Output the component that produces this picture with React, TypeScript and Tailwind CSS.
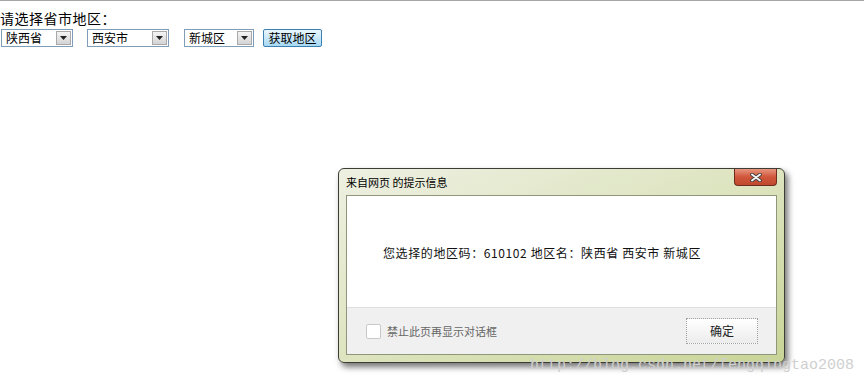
import React from 'react';

const cjk = { fontFamily: '"Noto Sans CJK SC", "Noto Sans", sans-serif' };

const FakeSelect: React.FC<{ value: string; width: string }> = ({ value, width }) => (
    <div className={`flex h-[18px] items-center border border-[#7f9db9] bg-white ${width}`}>
        <span className="flex-1 pl-[4px] text-[12px] leading-none text-black">{value}</span>
        {/* dropdown arrow box */}
        <div className="mr-[1px] flex h-[14px] w-[15px] items-center justify-center border border-[#a9a9a9] bg-gradient-to-b from-[#f4f4f4] to-[#d4d4d4]">
            <svg width="7" height="4" viewBox="0 0 7 4">
                <path d="M0 0 L7 0 L3.5 4 Z" fill="#222" />
            </svg>
        </div>
    </div>
);

export default function App() {
    return (
        <div className="relative h-[384px] w-[864px] overflow-hidden bg-white" style={cjk}>
            <div className="h-[2px] border-t border-[#a5a5a5]" />

            {/* Form */}
            <div className="pt-[7px] text-[14px] leading-[18px] tracking-[0.5px] text-black">请选择省市地区：</div>
            <div className="mt-[2px] flex items-center pl-[1px]">
                <FakeSelect value="陕西省" width="w-[72px]" />
                <div className="ml-[14px]">
                    <FakeSelect value="西安市" width="w-[82px]" />
                </div>
                <div className="ml-[15px]">
                    <FakeSelect value="新城区" width="w-[70px]" />
                </div>
                <button className="ml-[9px] h-[18px] w-[59px] rounded-[2px] border border-[#3c7fb1] bg-gradient-to-b from-[#eaf6fd] to-[#a7d9f5] text-[12px] leading-none text-black">
                    获取地区
                </button>
            </div>

            {/* Alert dialog window */}
            <div className="absolute left-[338px] top-[168px] flex h-[195px] w-[447px] flex-col rounded-[6px] border border-[#3d3d35] bg-gradient-to-br from-[#eef0e2] via-[#dde4bf] to-[#c9d497] px-[7px] pb-[7px] shadow-[3px_4px_6px_rgba(0,0,0,0.55)]">
                <div className="flex h-[26px] items-start justify-between">
                    <span className="pt-[6px] text-[11px] leading-[14px] text-black">来自网页 的提示信息</span>
                    <div className="flex h-[17px] w-[43px] items-center justify-center rounded-b-[4px] border border-t-0 border-[#6e2a1f] bg-gradient-to-b from-[#e6957f] via-[#d0553a] to-[#c04a2e]">
                        <svg width="12" height="9" viewBox="0 0 12 9">
                            <path d="M2 1.5 L10 7.5 M10 1.5 L2 7.5" stroke="#3a3a3a" strokeWidth="3.6" strokeLinecap="round" />
                            <path d="M2 1.5 L10 7.5 M10 1.5 L2 7.5" stroke="#f2f2f2" strokeWidth="2" strokeLinecap="round" />
                        </svg>
                    </div>
                </div>
                <div className="flex flex-1 flex-col border border-[#8f967a]">
                    <div className="flex h-[111px] items-center bg-white pl-[36px] pt-[3px] text-[12px] tracking-[0.6px] text-[#111]">
                        您选择的地区码：610102 地区名：陕西省 西安市 新城区
                    </div>
                    <div className="flex flex-1 items-center justify-between border-t border-[#dfdfdf] bg-[#f0f0f0] pl-[19px] pr-[18px]">
                        <div className="flex items-center gap-[6px]">
                            <div className="h-[15px] w-[15px] rounded-[2px] border border-[#c9c9c9] bg-white" />
                            <span className="text-[11px] text-[#666]">禁止此页再显示对话框</span>
                        </div>
                        <button className="h-[26px] w-[72px] border border-dotted border-[#a0a0a0] bg-gradient-to-b from-white to-[#ececec] text-[12px] text-[#222]">
                            确定
                        </button>
                    </div>
                </div>
            </div>

            {/* watermark */}
            <div
                className="absolute left-[530px] top-[357px] text-[15px] leading-[18px] text-[#cfcfcf]"
                style={{ fontFamily: '"Liberation Mono", monospace' }}
            >
                http://blog.csdn.net/fengqingtao2008
            </div>
        </div>
    );
}
